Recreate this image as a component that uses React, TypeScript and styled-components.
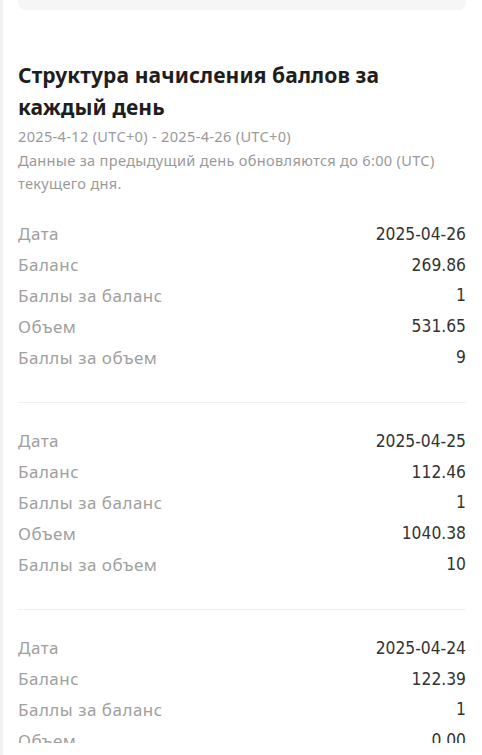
import React from "react";
import styled, { createGlobalStyle } from "styled-components";

const Global = createGlobalStyle`
  html, body { margin: 0; padding: 0; background: #ffffff; }
  body { font-family: "Noto Sans", Roboto, Arial, sans-serif; -webkit-font-smoothing: antialiased; }
  * { box-sizing: border-box; }
`;

const Page = styled.div`
  position: relative;
  width: 482px;
  height: 755px;
  overflow: hidden;
  border-left: 3px solid #f1f1f1;
  background: #fff;
`;

const BottomMask = styled.div`
  position: absolute;
  left: 0;
  right: 0;
  bottom: 0;
  height: 12px;
  background: #fff;
`;

const TopCard = styled.div`
  margin: 0 16px 0 15px;
  height: 10px;
  background: #f6f6f6;
  border-radius: 0 0 8px 8px;
`;

const Section = styled.section`
  padding: 49px 16px 0 15px;
`;

const Title = styled.h2`
  margin: 0;
  max-width: 400px;
  font-size: 21px;
  line-height: 32px;
  font-weight: 700;
  letter-spacing: 0.1px;
  color: #1e1e1e;
`;

const Meta = styled.p<{ $top?: number }>`
  margin: ${(p) => p.$top ?? 0}px 0 0;
  font-size: 14.6px;
  line-height: 23.5px;
  letter-spacing: 0.3px;
  color: #9a9a9a;
`;

const Block = styled.div`
  padding: 22px 0 30px;
  border-bottom: 1px solid #f0f0f0;
  &:first-of-type { padding-top: 23px; }
`;

const Row = styled.div`
  display: flex;
  justify-content: space-between;
  align-items: center;
  height: 30.8px;
`;

const Label = styled.span`
  font-size: 17px;
  letter-spacing: 0.5px;
  color: #a0a0a0;
`;

const Value = styled.span`
  font-size: 17.3px;
  color: #333;
  font-family: "DejaVu Sans Condensed", Roboto, sans-serif;
`;

type Day = { date: string; balance: string; bp: string; vol: string; vp: string };

const days: Day[] = [
  { date: "2025-04-26", balance: "269.86", bp: "1", vol: "531.65", vp: "9" },
  { date: "2025-04-25", balance: "112.46", bp: "1", vol: "1040.38", vp: "10" },
  { date: "2025-04-24", balance: "122.39", bp: "1", vol: "0.00", vp: "0" },
];

export default function App() {
  return (
    <Page>
      <Global />
      <TopCard />
      <Section>
        <Title>Структура начисления баллов за каждый день</Title>
        <Meta $top={2}>2025-4-12 (UTC+0) - 2025-4-26 (UTC+0)</Meta>
        <Meta>Данные за предыдущий день обновляются до 6:00 (UTC) текущего дня.</Meta>
        {days.map((d) => (
          <Block key={d.date}>
            <Row><Label>Дата</Label><Value>{d.date}</Value></Row>
            <Row><Label>Баланс</Label><Value>{d.balance}</Value></Row>
            <Row><Label>Баллы за баланс</Label><Value>{d.bp}</Value></Row>
            <Row><Label>Объем</Label><Value>{d.vol}</Value></Row>
            <Row><Label>Баллы за объем</Label><Value>{d.vp}</Value></Row>
          </Block>
        ))}
      </Section>
      <BottomMask />
    </Page>
  );
}
